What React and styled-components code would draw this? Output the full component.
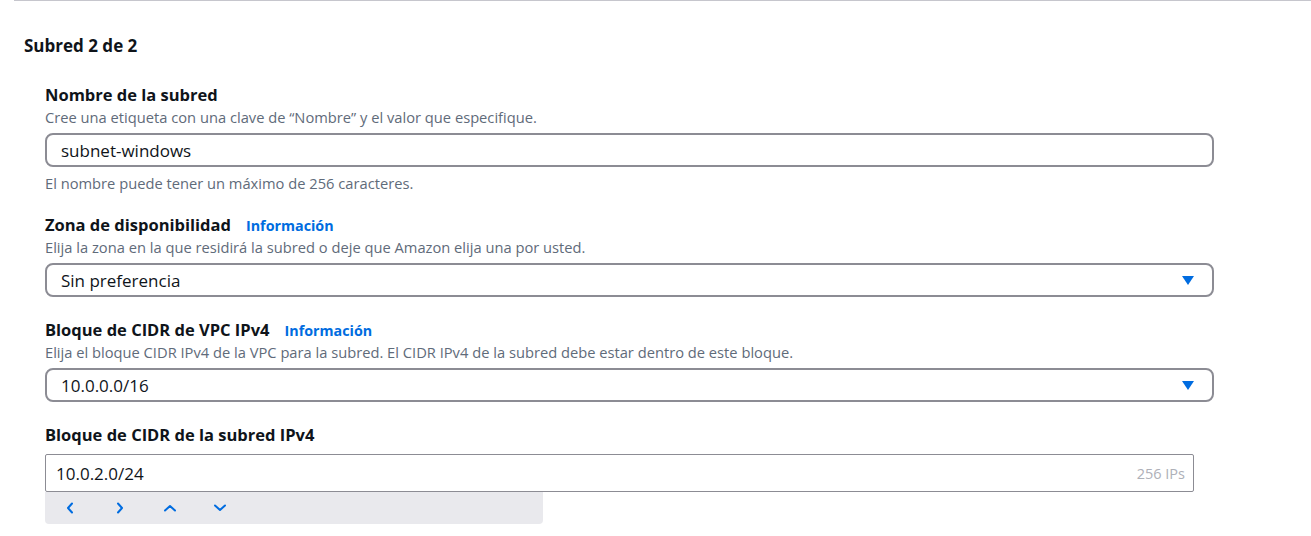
import React from 'react'
import styled, { createGlobalStyle } from 'styled-components'

const Global = createGlobalStyle`
  body {
    margin: 0;
    background: #fff;
    font-family: "Open Sans", "Liberation Sans", sans-serif;
    color: #0f141a;
  }
`

const Panel = styled.div`
  margin-left: 14px;
  border-top: 1px solid #c6c6cd;
  padding: 34px 0 12px 10px;
`

const Heading = styled.h2`
  margin: 0;
  font-size: 17px;
  line-height: 22px;
  font-weight: 700;
`

const Fields = styled.div`
  margin: 27px 0 0 21px;
  width: 1169px;
  display: flex;
  flex-direction: column;
  gap: 22px;
`

const Field = styled.div`
  display: flex;
  flex-direction: column;
`

const LabelRow = styled.div`
  display: flex;
  align-items: baseline;
  gap: 15px;
  height: 22px;
  line-height: 22px;
`

const Label = styled.label`
  font-size: 16.5px;
  font-weight: 700;
`

const Info = styled.a`
  font-size: 14.3px;
  line-height: 20px;
  font-weight: 700;
  color: #006ce0;
  text-decoration: none;
`

const Desc = styled.div`
  font-size: 14.7px;
  line-height: 22px;
  color: #5f6b7a;
`

const Constraint = styled(Desc)`
  line-height: 18px;
  margin-top: 7px;
`

const Box = styled.div`
  margin-top: 5px;
  height: 34px;
  box-sizing: border-box;
  border: 2px solid #8c8c94;
  border-radius: 8px;
  padding: 0 18px 0 14px;
  display: flex;
  align-items: center;
  justify-content: space-between;
  font-size: 17px;
`

const Caret = styled.span`
  width: 0;
  height: 0;
  border-left: 6px solid transparent;
  border-right: 6px solid transparent;
  border-top: 9px solid #006ce0;
`

const CidrInput = styled.div`
  margin-top: 8px;
  width: 1149px;
  height: 38px;
  box-sizing: border-box;
  border: 1px solid #8c8c94;
  border-radius: 2px;
  padding: 0 8px 0 10px;
  display: flex;
  align-items: center;
  justify-content: space-between;
  font-size: 17px;
`

const Count = styled.span`
  font-size: 14.5px;
  color: #aeb0b8;
`

const Stepper = styled.div`
  width: 498px;
  height: 32px;
  background: #e9e9ed;
  border-radius: 0 0 4px 4px;
  display: flex;
  align-items: center;
`

const StepBtn = styled.span`
  width: 50px;
  display: flex;
  justify-content: center;
  svg { display: block; }
`

const Chevron = ({ d }) => (
  <svg width="14" height="14" viewBox="0 0 14 14" fill="none" stroke="#006ce0" strokeWidth="2" strokeLinecap="round" strokeLinejoin="round">
    <path d={d} />
  </svg>
)

const chevrons = ['M9 2.5 L5 7 L9 11.5', 'M5 2.5 L9 7 L5 11.5', 'M2 9.5 L7 5 L12 9.5', 'M2 4.5 L7 9 L12 4.5']

export default function App() {
  return (
    <>
      <Global />
      <Panel>
        <Heading>Subred 2 de 2</Heading>
        <Fields>
          <Field>
            <LabelRow><Label>Nombre de la subred</Label></LabelRow>
            <Desc>Cree una etiqueta con una clave de “Nombre” y el valor que especifique.</Desc>
            <Box>subnet-windows</Box>
            <Constraint>El nombre puede tener un máximo de 256 caracteres.</Constraint>
          </Field>
          <Field>
            <LabelRow><Label>Zona de disponibilidad</Label><Info>Información</Info></LabelRow>
            <Desc>Elija la zona en la que residirá la subred o deje que Amazon elija una por usted.</Desc>
            <Box>Sin preferencia<Caret /></Box>
          </Field>
          <Field>
            <LabelRow><Label>Bloque de CIDR de VPC IPv4</Label><Info>Información</Info></LabelRow>
            <Desc>Elija el bloque CIDR IPv4 de la VPC para la subred. El CIDR IPv4 de la subred debe estar dentro de este bloque.</Desc>
            <Box>10.0.0.0/16<Caret /></Box>
          </Field>
          <Field>
            <LabelRow><Label>Bloque de CIDR de la subred IPv4</Label></LabelRow>
            <CidrInput>10.0.2.0/24<Count>256 IPs</Count></CidrInput>
            <Stepper>
              {chevrons.map((d, i) => (
                <StepBtn key={i}><Chevron d={d} /></StepBtn>
              ))}
            </Stepper>
          </Field>
        </Fields>
      </Panel>
    </>
  )
}
